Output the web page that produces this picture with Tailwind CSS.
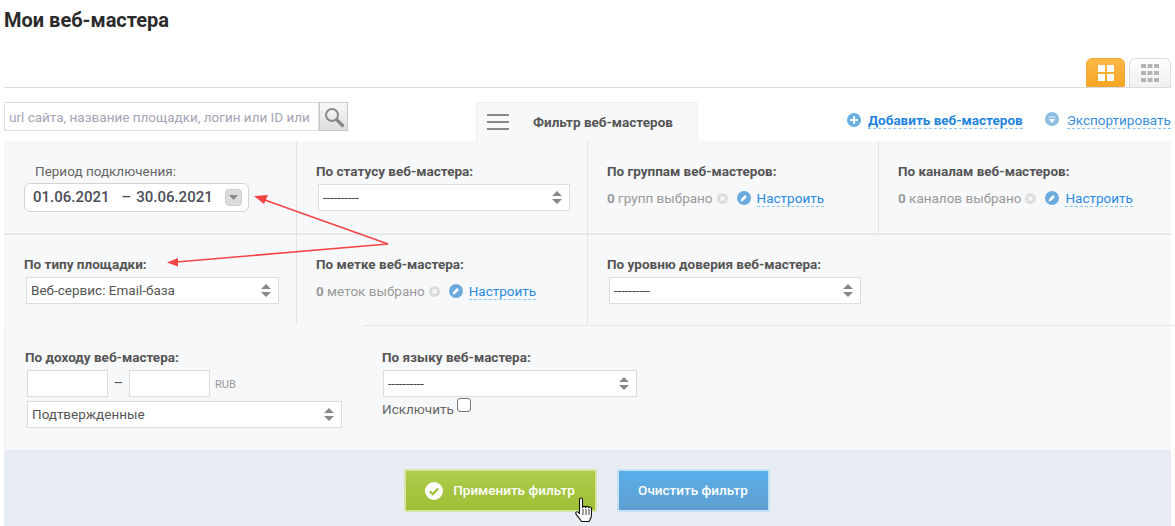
<!DOCTYPE html>
<html lang="ru">
<head>
    <meta charset="UTF-8">
    <meta name="viewport" content="width=device-width, initial-scale=1.0">
    <title>Мои веб-мастера</title>
    <script src="https://cdn.jsdelivr.net/npm/@tailwindcss/browser@4"></script>
</head>
<body class="bg-white font-['Roboto',sans-serif] text-[13.5px] text-[#555]">
<div class="relative w-[1175px] h-[526px] overflow-hidden">

    <!-- Заголовок -->
    <div class="h-[58px] pl-1 pt-[8px]">
        <h1 class="text-[20px] leading-[24px] font-bold text-[#2b2b2b]">Мои веб-мастера</h1>
    </div>

    <!-- Переключатель вида -->
    <div class="h-[30px] ml-1 w-[1167px] border-b border-[#dcdcdc] flex justify-end gap-1">
        <div class="w-[39px] h-[29px] rounded-t-[6px] bg-gradient-to-b from-[#fbb846] to-[#f6a623] border border-[#f0a838] flex items-center justify-center">
            <svg width="16" height="16" viewBox="0 0 16 16" fill="#fff"><rect width="7" height="7"/><rect x="9" width="7" height="7"/><rect y="9" width="7" height="7"/><rect x="9" y="9" width="7" height="7"/></svg>
        </div>
        <div class="w-[42px] h-[29px] rounded-t-[6px] bg-gradient-to-b from-white to-[#f0f0f0] border border-[#ddd] border-b-0 flex items-center justify-center">
            <svg width="18" height="18" viewBox="0 0 18 18" fill="#b4b4b4"><rect width="5" height="4"/><rect x="6.5" width="5" height="4"/><rect x="13" width="5" height="4"/><rect y="7" width="5" height="4"/><rect x="6.5" y="7" width="5" height="4"/><rect x="13" y="7" width="5" height="4"/><rect y="14" width="5" height="4"/><rect x="6.5" y="14" width="5" height="4"/><rect x="13" y="14" width="5" height="4"/></svg>
        </div>
    </div>

    <!-- Поиск, вкладка фильтра, ссылки -->
    <div class="h-[53px] pl-1 pt-[14px] flex items-start">
        <div class="flex w-[344px] h-[29px] shrink-0">
            <input class="w-[315px] h-[29px] border border-[#ddd] bg-white px-[4px] text-[13.5px] outline-none placeholder:text-[#a8a3b5]" placeholder="url сайта, название площадки, логин или ID или">
            <button class="w-[29px] h-[29px] border border-[#c8c8c8] bg-gradient-to-b from-[#f8f8f8] to-[#dedede] flex items-center justify-center">
                <svg width="22" height="22" viewBox="0 0 22 22" fill="none"><circle cx="9" cy="9" r="6" stroke="#888" stroke-width="2"/><path d="M13.5 13.5 L19.5 19.5" stroke="#888" stroke-width="3.2" stroke-linecap="round"/></svg>
            </button>
        </div>
        <div class="ml-[128px] w-[222px] h-[39px] shrink-0 bg-[#f7f8fa] border-t border-x border-[#eee] rounded-t-[3px] flex items-center">
            <div class="ml-[10px] w-[22px] flex flex-col gap-[5px]">
                <div class="h-[2px] bg-[#888]"></div><div class="h-[2px] bg-[#888]"></div><div class="h-[2px] bg-[#888]"></div>
            </div>
            <span class="ml-[24px] text-[13.5px] font-bold text-[#555]">Фильтр веб-мастеров</span>
        </div>
        <div class="ml-[149px] flex items-center h-[36px] whitespace-nowrap">
            <svg class="shrink-0" width="14" height="14" viewBox="0 0 14 14"><circle cx="7" cy="7" r="7" fill="#6cb0e4"/><path d="M7 3.2v7.6M3.2 7h7.6" stroke="#fff" stroke-width="2"/></svg>
            <a class="ml-[7px] text-[13.5px] leading-[16px] font-bold text-[#1f84dc] border-b border-dashed border-[#8cc4f2]">Добавить веб-мастеров</a>
            <svg class="shrink-0 ml-[22px] -mt-[2px]" width="14" height="14" viewBox="0 0 14 14"><circle cx="7" cy="7" r="7" fill="#8dbde2"/><path d="M3.5 5h7M4.5 7.5h5L7 10.5z" fill="#fff" stroke="#fff" stroke-width=".8"/></svg>
            <a class="ml-[8px] text-[13.5px] leading-[16px] text-[#3a8fdc] border-b border-dashed border-[#8cc4f2]">Экспортировать</a>
        </div>
    </div>

    <!-- Панель фильтра -->
    <div class="ml-1 w-[1167px] bg-[#f7f8fa]">

        <!-- Ряд 1 -->
        <div class="grid grid-cols-[292px_291px_291px_293px] h-[94px] border-b-2 border-[#e8e8e8]">
            <div class="pl-[20px] pt-[22px]">
                <div class="pl-[11px] leading-[16px] text-[#666]">Период подключения:</div>
                <div class="mt-[4px] w-[225px] h-[29px] bg-white border border-[#d4d4d4] rounded-[6px] flex items-center pl-[8px] text-[15px] font-medium text-[#4d4d58]">
                    <span>01.06.2021</span>
                    <span class="ml-[12px]">–</span>
                    <span class="ml-[5px]">30.06.2021</span>
                    <span class="ml-[12px] w-[17px] h-[17px] rounded-[4px] bg-[#dcdcdc] border border-[#ccc] flex items-center justify-center">
                        <svg width="9" height="5" viewBox="0 0 9 5"><path d="M0 0h9L4.5 5z" fill="#888"/></svg>
                    </span>
                </div>
            </div>
            <div class="border-l border-[#e4e4e4] pl-[19px] pt-[22px]">
                <div class="leading-[16px] font-bold text-[#555]">По статусу веб-мастера:</div>
                <div class="mt-[5px] relative w-[252px] h-[27px] ml-[2px] bg-white border border-[#ddd] flex items-center pl-[4px] text-[#444] text-[13px]">
                    ----------
                    <svg class="absolute right-[7px] top-[6px]" width="10" height="13" viewBox="0 0 10 13" fill="#888"><path d="M5 0l5 5H0zM5 13L0 8h10z"/></svg>
                </div>
            </div>
            <div class="border-l border-[#e4e4e4] pl-[19px] pt-[22px]">
                <div class="leading-[16px] font-bold text-[#555]">По группам веб-мастеров:</div>
                <div class="mt-[7px] h-[24px] flex items-center text-[#999]">
                    <span class="font-bold">0</span>&nbsp;групп выбрано
                    <svg class="ml-[4px] mt-[1px]" width="11" height="11" viewBox="0 0 11 11"><circle cx="5.5" cy="5.5" r="5.5" fill="#ddd"/><path d="M3.5 3.5l4 4M7.5 3.5l-4 4" stroke="#fff" stroke-width="1.4"/></svg>
                    <svg class="ml-[9px]" width="14" height="14" viewBox="0 0 14 14"><circle cx="7" cy="7" r="7" fill="#6caadd"/><path d="M3.6 10.4l.7-2.6 3.7-3.7 1.9 1.9-3.7 3.7z" fill="#fff"/></svg>
                    <a class="ml-[6px] leading-[16px] text-[#2a8ae0] border-b border-dashed border-[#8cc4f2]">Настроить</a>
                </div>
            </div>
            <div class="border-l border-[#e4e4e4] pl-[19px] pt-[22px]">
                <div class="leading-[16px] font-bold text-[#555]">По каналам веб-мастеров:</div>
                <div class="mt-[7px] h-[24px] flex items-center text-[#999]">
                    <span class="font-bold">0</span>&nbsp;каналов выбрано
                    <svg class="ml-[4px] mt-[1px]" width="11" height="11" viewBox="0 0 11 11"><circle cx="5.5" cy="5.5" r="5.5" fill="#ddd"/><path d="M3.5 3.5l4 4M7.5 3.5l-4 4" stroke="#fff" stroke-width="1.4"/></svg>
                    <svg class="ml-[9px]" width="14" height="14" viewBox="0 0 14 14"><circle cx="7" cy="7" r="7" fill="#6caadd"/><path d="M3.6 10.4l.7-2.6 3.7-3.7 1.9 1.9-3.7 3.7z" fill="#fff"/></svg>
                    <a class="ml-[6px] leading-[16px] text-[#2a8ae0] border-b border-dashed border-[#8cc4f2]">Настроить</a>
                </div>
            </div>
        </div>

        <!-- Ряд 2 -->
        <div class="grid grid-cols-[292px_291px_584px] h-[90px]">
            <div class="pl-[20px] pt-[21px]">
                <div class="leading-[16px] font-bold text-[#555]">По типу площадки:</div>
                <div class="mt-[5px] relative w-[253px] h-[27px] ml-[2px] bg-white border border-[#ddd] flex items-center pl-[4px] text-[#555]">
                    Веб-сервис: Email-база
                    <svg class="absolute right-[7px] top-[6px]" width="10" height="13" viewBox="0 0 10 13" fill="#888"><path d="M5 0l5 5H0zM5 13L0 8h10z"/></svg>
                </div>
            </div>
            <div class="border-l border-[#e4e4e4] pl-[19px] pt-[21px]">
                <div class="leading-[16px] font-bold text-[#555]">По метке веб-мастера:</div>
                <div class="mt-[7px] h-[24px] flex items-center text-[#999]">
                    <span class="font-bold">0</span>&nbsp;меток выбрано
                    <svg class="ml-[4px] mt-[1px]" width="11" height="11" viewBox="0 0 11 11"><circle cx="5.5" cy="5.5" r="5.5" fill="#ddd"/><path d="M3.5 3.5l4 4M7.5 3.5l-4 4" stroke="#fff" stroke-width="1.4"/></svg>
                    <svg class="ml-[9px]" width="14" height="14" viewBox="0 0 14 14"><circle cx="7" cy="7" r="7" fill="#6caadd"/><path d="M3.6 10.4l.7-2.6 3.7-3.7 1.9 1.9-3.7 3.7z" fill="#fff"/></svg>
                    <a class="ml-[6px] leading-[16px] text-[#2a8ae0] border-b border-dashed border-[#8cc4f2]">Настроить</a>
                </div>
            </div>
            <div class="border-l border-[#e4e4e4] pl-[19px] pt-[21px]">
                <div class="leading-[16px] font-bold text-[#555]">По уровню доверия веб-мастера:</div>
                <div class="mt-[5px] relative w-[252px] h-[27px] ml-[2px] bg-white border border-[#ddd] flex items-center pl-[4px] text-[#444] text-[13px]">
                    ----------
                    <svg class="absolute right-[7px] top-[6px]" width="10" height="13" viewBox="0 0 10 13" fill="#888"><path d="M5 0l5 5H0zM5 13L0 8h10z"/></svg>
                </div>
            </div>
        </div>

        <!-- Ряд 3 -->
        <div class="h-[125px] ml-[1px] border-l border-[#eee] flex">
            <div class="w-[376px] pl-[19px] pt-[24px]">
                <div class="leading-[16px] font-bold text-[#555]">По доходу веб-мастера:</div>
                <div class="mt-[5px] ml-[2px] flex items-center">
                    <input class="w-[81px] h-[27px] bg-white border border-[#ddd]">
                    <span class="w-[21px] text-center text-[15px] text-[#555]">–</span>
                    <input class="w-[81px] h-[27px] bg-white border border-[#ddd]">
                    <span class="ml-[5px] mt-[3px] text-[11px] text-[#999]">RUB</span>
                </div>
                <div class="mt-[4px] ml-[2px] relative w-[315px] h-[27px] bg-white border border-[#ddd] flex items-center pl-[4px] text-[#555]">
                    Подтвержденные
                    <svg class="absolute right-[7px] top-[6px]" width="10" height="13" viewBox="0 0 10 13" fill="#888"><path d="M5 0l5 5H0zM5 13L0 8h10z"/></svg>
                </div>
            </div>
            <div class="pt-[24px]">
                <div class="leading-[16px] font-bold text-[#555]">По языку веб-мастера:</div>
                <div class="mt-[5px] ml-[1px] relative w-[254px] h-[27px] bg-white border border-[#ddd] flex items-center pl-[4px] text-[#444] text-[13px]">
                    ----------
                    <svg class="absolute right-[7px] top-[6px]" width="10" height="13" viewBox="0 0 10 13" fill="#888"><path d="M5 0l5 5H0zM5 13L0 8h10z"/></svg>
                </div>
                <div class="mt-[1px] flex items-start text-[#666]">
                    <span class="mt-[1px]">Исключить</span>
                    <span class="ml-[3px] w-[14px] h-[14px] bg-white border border-[#777] rounded-[3px]"></span>
                </div>
            </div>
        </div>

        <!-- Кнопки -->
        <div class="h-[76px] bg-[#e8edf4] flex items-start justify-center gap-[20px] pt-[19px] pr-[2px]">
            <button class="w-[193px] h-[43px] bg-gradient-to-b from-[#afcd4e] to-[#9dbf33] border-2 border-[#d5e5a3] rounded-[2px] flex items-center justify-center text-white text-[13.5px] font-medium">
                <svg width="18" height="18" viewBox="0 0 18 18"><circle cx="9" cy="9" r="9" fill="#fff"/><path d="M4.8 9.2l3 3 5.4-5.6" fill="none" stroke="#9dbf33" stroke-width="2.2"/></svg>
                <span class="ml-[10px]">Применить фильтр</span>
            </button>
            <button class="w-[153px] h-[43px] bg-gradient-to-b from-[#58aeea] to-[#609fd0] border-2 border-[#c3e2f7] rounded-[2px] text-white text-[13.5px] font-medium">Очистить фильтр</button>
        </div>
    </div>

    <!-- Линия под рядом 2 и справа -->
    <div class="absolute left-[363px] right-0 top-[325px] h-px bg-[#e6e6e6]"></div>

    <!-- Красные стрелки -->
    <svg class="absolute left-0 top-0 pointer-events-none" width="1175" height="526" viewBox="0 0 1175 526" fill="none">
        <path d="M388 244 L262 199" stroke="#f44545" stroke-width="1.6"/>
        <path d="M254 196 L268 195 L264 204 Z" fill="#f44545"/>
        <path d="M388 244 L176 262" stroke="#f44545" stroke-width="1.6"/>
        <path d="M167 262.500 L178 258 L178 266.500 Z" fill="#f44545"/>
    </svg>

    <!-- Курсор -->
    <svg class="absolute left-[575px] top-[497px]" width="20" height="28" viewBox="0 0 20 28">
        <path d="M4.500 2.500c0-2 3-2 3 0v8c.5-1.500 3-1.500 3 0 .5-1.500 3-1.500 3 .3.6-1.200 3-1 3 .8v6.400c0 3-1.500 4.500-2.500 6.500h-7.500c-1.500-2.500-3.500-4.500-5.500-7.500-1-1.500.8-3 2.200-1.800l1.300 1.300z" fill="#fff" stroke="#111" stroke-width="1.100" stroke-linejoin="round"/>
        <path d="M8 12v6M11 12v6M14 12v6" stroke="#111" stroke-width=".8"/>
    </svg>
</div>
</body>
</html>
